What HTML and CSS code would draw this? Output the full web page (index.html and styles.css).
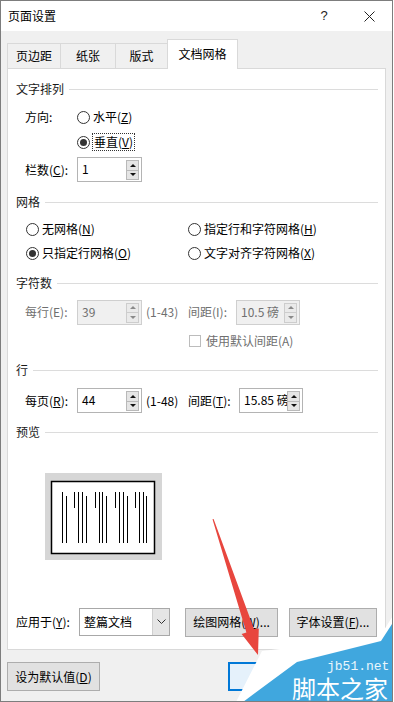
FILE: index.html
```html
<!DOCTYPE html>
<html lang="zh-CN">
<head>
<meta charset="utf-8">
<title>页面设置</title>
<link rel="stylesheet" href="styles.css">
</head>
<body>
<div class="window">
  <div class="titlebar">
    <span class="title">页面设置</span>
    <span class="help">?</span>
    <svg class="close" width="11" height="11" viewBox="0 0 11 11"><path d="M0.5 0.5L10.5 10.5M10.5 0.5L0.5 10.5" stroke="#222" stroke-width="1" fill="none"/></svg>
  </div>

  <div class="tabs">
    <div class="tab t1">页边距</div>
    <div class="tab t2">纸张</div>
    <div class="tab t3">版式</div>
    <div class="tab active">文档网格</div>
  </div>

  <div class="panel">
    <div class="sec s-layout">文字排列</div>
    <div class="row r-dir">
      <span class="lbl">方向:</span>
      <span class="radio"></span><span class="rtext">水平(<u>Z</u>)</span>
    </div>
    <div class="row r-vert">
      <span class="radio on"></span><span class="rtext focus">垂直(<u>V</u>)</span>
    </div>
    <div class="row r-cols">
      <span class="lbl">栏数(<u>C</u>):</span>
      <div class="spin"><span class="v">1</span><div class="btns"><span class="up"></span><span class="dn"></span></div></div>
    </div>

    <div class="sec s-grid">网格</div>
    <div class="grid-radios">
      <div class="opt"><span class="radio"></span><span class="rtext">无网格(<u>N</u>)</span></div>
      <div class="opt"><span class="radio"></span><span class="rtext">指定行和字符网格(<u>H</u>)</span></div>
      <div class="opt"><span class="radio on"></span><span class="rtext">只指定行网格(<u>O</u>)</span></div>
      <div class="opt"><span class="radio"></span><span class="rtext">文字对齐字符网格(<u>X</u>)</span></div>
    </div>

    <div class="sec s-chars">字符数</div>
    <div class="row r-chars disabled">
      <span class="lbl">每行(E):</span>
      <div class="spin off"><span class="v">39</span><div class="btns"><span class="up"></span><span class="dn"></span></div></div>
      <span class="range">(1-43)</span>
      <span class="lbl2 w48">间距(I):</span>
      <div class="spin off sp2"><span class="v">10.5 磅</span><div class="btns"><span class="up"></span><span class="dn"></span></div></div>
    </div>
    <div class="row r-check disabled">
      <span class="check"></span><span>使用默认间距(A)</span>
    </div>

    <div class="sec s-lines">行</div>
    <div class="row r-lines">
      <span class="lbl">每页(<u>R</u>):</span>
      <div class="spin"><span class="v">44</span><div class="btns"><span class="up"></span><span class="dn"></span></div></div>
      <span class="range">(1-48)</span>
      <span class="lbl2 w51">间距(<u>T</u>):</span>
      <div class="spin sp2"><span class="v">15.85 磅</span><div class="btns"><span class="up"></span><span class="dn"></span></div></div>
    </div>

    <div class="sec s-preview">预览</div>
    <svg class="preview" width="117" height="87" viewBox="0 0 117 87">
      <rect x="0" y="0" width="117" height="87" fill="#d6d6d6"/>
      <rect x="6.5" y="8.5" width="103" height="72" fill="#fff" stroke="#000" stroke-width="1.5"/>
      <g stroke="#000" stroke-width="1">
        <line x1="17.5" y1="19" x2="17.5" y2="70"/>
        <line x1="21.5" y1="23" x2="21.5" y2="70"/>
        <line x1="29.5" y1="19" x2="29.5" y2="35"/>
        <line x1="33.5" y1="19" x2="33.5" y2="70"/>
        <line x1="37.5" y1="19" x2="37.5" y2="70"/>
        <line x1="41.5" y1="23" x2="41.5" y2="70"/>
        <line x1="50.5" y1="19" x2="50.5" y2="35"/>
        <line x1="54.5" y1="19" x2="54.5" y2="70"/>
        <line x1="57.5" y1="19" x2="57.5" y2="70"/>
        <line x1="61.5" y1="23" x2="61.5" y2="70"/>
        <line x1="70.5" y1="19" x2="70.5" y2="35"/>
        <line x1="74.5" y1="19" x2="74.5" y2="70"/>
        <line x1="78.5" y1="19" x2="78.5" y2="70"/>
        <line x1="82.5" y1="23" x2="82.5" y2="70"/>
        <line x1="90.5" y1="19" x2="90.5" y2="35"/>
        <line x1="94.5" y1="19" x2="94.5" y2="70"/>
        <line x1="98.5" y1="19" x2="98.5" y2="70"/>
        <line x1="101.5" y1="23" x2="101.5" y2="70"/>
      </g>
    </svg>

    <div class="row r-apply">
      <span class="lbl3">应用于(<u>Y</u>):</span>
      <div class="select"><span class="stext">整篇文档</span><span class="drop"><svg width="9" height="6" viewBox="0 0 9 6"><path d="M0.5 0.5L4.5 4.5L8.5 0.5" stroke="#333" fill="none"/></svg></span></div>
      <button class="btn b-draw">绘图网格(<u>W</u>)...</button>
      <button class="btn b-font">字体设置(<u>F</u>)...</button>
    </div>
  </div>

  <div class="footer">
    <button class="btn b-default">设为默认值(<u>D</u>)</button>
    <button class="btn b-ok"></button>
  </div>

  <svg class="overlay" width="394" height="702" viewBox="0 0 394 702">
    <polygon points="212.5,519.2 213.6,518.9 254,628.9 258.8,628.4 258,655 241.6,634 246.4,632.5" fill="#e8463e"/>
    <polygon points="236,702 262,651 379,638 394,614 394,702" fill="#ffffff"/>
    <polygon points="243,702 297,662 381,641 394,621 394,702" fill="#40a7de"/>
    <text x="327" y="670" class="wm-url">jb51.net</text>
    <text x="292" y="698" class="wm-name">脚本之家</text>
  </svg>
</div>
</body>
</html>
```

FILE: styles.css
```css
* { box-sizing: border-box; }
html, body { margin: 0; padding: 0; background: #fff; }
body {
  font-family: "Noto Sans CJK SC", "Noto Sans", sans-serif;
  font-size: 12px;
  line-height: 16px;
  color: #000;
}
u { text-underline-offset: 1px; text-decoration-thickness: 1px; }

.window {
  position: relative;
  width: 393px;
  height: 702px;
  border: 1px solid #7d7d7d;
  background: #f0f0f0;
  overflow: hidden;
}

.titlebar {
  height: 30px;
  background: #fff;
  display: flex;
  align-items: center;
  padding-left: 7px;
  padding-right: 17px;
}
.title { flex: 1; }
.help {
  width: 12px;
  text-align: center;
  margin-right: 34px;
  font-family: "Liberation Sans", sans-serif;
  font-size: 13px;
  color: #222;
}
.close { display: block; }

.tabs {
  height: 37px;
  display: flex;
  align-items: flex-end;
  padding-left: 6px;
}
.tab {
  height: 25px;
  border: 1px solid #d9d9d9;
  border-bottom: none;
  margin-right: -1px;
  display: flex;
  align-items: center;
  justify-content: center;
  background: #f0f0f0;
}
.t1 { width: 54px; }
.t2 { width: 56px; }
.t3 { width: 53px; }
.tab.active {
  width: 71px;
  height: 30px;
  background: #fff;
  position: relative;
  z-index: 1;
  margin-bottom: -1px;
  padding-bottom: 2px;
}

.panel {
  margin-left: 6px;
  width: 379px;
  height: 582px;
  border: 1px solid #d9d9d9;
  background: #fff;
  padding: 0 7px 0 8px;
  display: flex;
  flex-direction: column;
}

.sec {
  height: 16px;
  display: flex;
  align-items: center;
  gap: 5px;
  color: #1a1a1a;
}
.sec::after {
  content: "";
  flex: 1;
  height: 1px;
  background: #dcdcdc;
}

.s-layout { margin-top: 12px; }
.r-dir { margin-top: 10px; height: 20px; }
.r-vert { margin-top: 5px; height: 20px; padding-left: 61px; }
.r-cols { margin-top: 5px; height: 25px; }
.s-grid { margin-top: 12px; }
.grid-radios {
  margin-top: 9px;
  display: grid;
  grid-template-columns: 162px 1fr;
  grid-auto-rows: 20px;
  row-gap: 4px;
  padding-left: 10px;
}
.s-chars { margin-top: 12px; }
.r-chars { margin-top: 8px; height: 26px; }
.r-check { margin-top: 6px; height: 20px; padding-left: 173px; }
.s-lines { margin-top: 11px; }
.r-lines { margin-top: 10px; height: 25px; }
.s-preview { margin-top: 11px; }
.preview { display: block; margin-top: 33px; margin-left: 29px; }
.r-apply { margin-top: 48px; height: 28px; }

.row { display: flex; align-items: center; }
.opt { display: flex; align-items: center; }

.lbl { width: 52px; margin-left: 9px; }
.w48 { width: 48px; }
.w51 { width: 51px; }
.lbl3 { width: 63px; }
.range { width: 42px; margin-left: 4px; }

.radio {
  width: 13px;
  height: 13px;
  border: 1px solid #333;
  border-radius: 50%;
  background: #fff;
  display: inline-flex;
  align-items: center;
  justify-content: center;
  margin-right: 3px;
  flex: none;
}
.radio.on::after {
  content: "";
  width: 7px;
  height: 7px;
  border-radius: 50%;
  background: #333;
}
.rtext { white-space: nowrap; }
.rtext.focus {
  border: 1px dotted #333;
  padding: 0 1px;
  margin-left: -1px;
  height: 18px;
  line-height: 16px;
}

.spin {
  width: 65px;
  height: 25px;
  border: 1px solid #b4b4b4;
  background: #fff;
  display: flex;
  flex: none;
}
.spin.sp2 { width: 64px; }
.spin .v {
  flex: 1;
  padding-left: 4px;
  line-height: 22px;
  overflow: hidden;
  white-space: nowrap;
}
.spin .btns {
  width: 15px;
  display: flex;
  flex-direction: column;
  padding: 2px 2px 1px 0;
  flex: none;
}
.spin .up, .spin .dn {
  flex: 1;
  background: #e5e5e5;
  border: 1px solid #b9b9b9;
  display: flex;
  align-items: center;
  justify-content: center;
}
.spin .dn { border-top: none; }
.spin .up::after {
  content: "";
  border-left: 3px solid transparent;
  border-right: 3px solid transparent;
  border-bottom: 3px solid #111;
}
.spin .dn::after {
  content: "";
  border-left: 3px solid transparent;
  border-right: 3px solid transparent;
  border-top: 3px solid #111;
}
.spin.off { background: #f0f0f0; border-color: #cfcfcf; }
.spin.off .up, .spin.off .dn { background: #eaeaea; border-color: #cdcdcd; }
.spin.off .up::after { border-bottom-color: #8a8a8a; }
.spin.off .dn::after { border-top-color: #8a8a8a; }

.disabled { color: #6f6f6f; }
.check {
  width: 12px;
  height: 12px;
  border: 1px solid #bcbcbc;
  background: #fff;
  margin-right: 5px;
  flex: none;
}

.select {
  width: 91px;
  height: 28px;
  border: 1px solid #a8a8a8;
  background: #fff;
  display: flex;
  flex: none;
}
.stext { flex: 1; padding-left: 4px; line-height: 26px; }
.drop {
  width: 17px;
  background: #e5e5e5;
  border-left: 1px solid #cfcfcf;
  display: flex;
  align-items: center;
  justify-content: center;
}
.drop svg { display: block; }

.btn {
  font-family: inherit;
  font-size: 12px;
  line-height: 16px;
  color: #000;
  background: #e1e1e1;
  border: 1px solid #adadad;
  padding: 0;
  height: 29px;
  flex: none;
  white-space: nowrap;
}
.b-draw { width: 93px; margin-left: 15px; }
.b-font { width: 88px; margin-left: 11px; }

.footer {
  display: flex;
  margin-top: 12px;
  padding-left: 6px;
}
.b-default { width: 93px; }
.b-ok {
  width: 86px;
  margin-left: 128px;
  border: 2px solid #0078d7;
  background: #e5f1fb;
}

.overlay {
  position: absolute;
  left: -1px;
  top: -1px;
  pointer-events: none;
}
.wm-url {
  font-family: "Liberation Mono", monospace;
  font-size: 13px;
  fill: #eaf6fc;
}
.wm-name {
  font-family: "Noto Sans CJK SC", sans-serif;
  font-size: 24px;
  fill: #ffffff;
}
```
